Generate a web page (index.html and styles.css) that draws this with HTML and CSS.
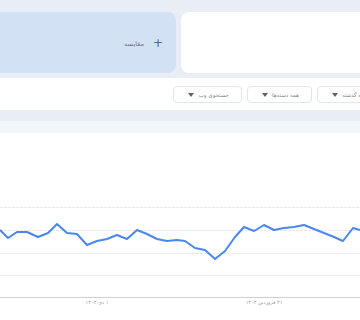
FILE: index.html
```html
<!DOCTYPE html>
<html lang="fa">
<head>
    <meta charset="UTF-8">
    <meta name="viewport" content="width=device-width, initial-scale=1.0">
    <title>روندها</title>
    <link rel="stylesheet" href="styles.css">
</head>
<body>
    <div class="page">
        <!-- search term cards -->
        <div class="terms">
            <div class="card compare">
                <span class="compare-label">مقایسه</span>
                <span class="plus">+</span>
            </div>
            <div class="card term"></div>
        </div>

        <!-- filters -->
        <div class="toolbar">
            <div class="chip chip-web"><span class="arrow"></span><span class="chip-text">جستجوی وب</span></div>
            <div class="chip chip-cat"><span class="arrow"></span><span class="chip-text">همه دسته‌ها</span></div>
            <div class="chip chip-time"><span class="arrow"></span><span class="chip-text">۱۲ ماه گذشته</span></div>
        </div>

        <div class="divider"></div>
        <div class="panel-head"></div>

        <!-- interest over time -->
        <div class="chart">
            <svg width="360" height="187" viewBox="0 0 360 187">
                <g class="grid">
                    <line x1="0" y1="74.5" x2="360" y2="74.5"></line>
                    <line x1="0" y1="97.5" x2="360" y2="97.5"></line>
                    <line x1="0" y1="120.5" x2="360" y2="120.5"></line>
                    <line x1="0" y1="142.5" x2="360" y2="142.5"></line>
                </g>
                <line class="axis" x1="0" y1="164.5" x2="360" y2="164.5"></line>
                <polyline class="series" points="0,97 8,105 17,99 27,99 38,104 48,100 57,91 67,100 77,101 87,112 97,108 107,106 117,102 127,106 137,97 147,101 157,106 167,108 177,107 185,108 195,115 205,117 215,126 225,118 235,104 244,94 254,98 264,92 274,97 284,95 294,94 304,92 314,96 324,100 334,104 343,108 353,95 360,97"></polyline>
                <text class="tick" x="97" y="171">۱ دی ۱۴۰۲</text>
                <text class="tick" x="264" y="171">۲۱ فروردین ۱۴۰۳</text>
            </svg>
        </div>
    </div>
</body>
</html>
```

FILE: styles.css
```css
body {
    margin: 0;
    background: #e9edf6;
    font-family: "DejaVu Sans", sans-serif;
    overflow: hidden;
}
.page {
    width: 360px;
    height: 320px;
    overflow: hidden;
}
.terms {
    display: flex;
    gap: 5px;
    margin-left: -100px;
    padding: 12px 0 5px;
}
.card {
    flex: none;
    width: 276px;
    height: 61px;
    border-radius: 8px;
}
.compare {
    background: #d3e1f4;
    display: flex;
    align-items: center;
    justify-content: flex-end;
    gap: 9px;
    padding-right: 13px;
    box-sizing: border-box;
    color: #70757a;
}
.compare-label {
    font-size: 6.5px;
    margin-top: 2px;
}
.plus {
    font-size: 12px;
    color: #5f6368;
}
.term {
    background: #fff;
}
.toolbar {
    background: #fff;
    height: 32px;
    display: flex;
    gap: 5px;
    padding: 8px 0 0 173px;
    box-sizing: border-box;
    white-space: nowrap;
}
.chip {
    flex: none;
    height: 17px;
    border: 1px solid #e3e5e8;
    border-radius: 4px;
    box-sizing: border-box;
    display: flex;
    align-items: center;
    justify-content: space-between;
    padding: 0 12px 0 14px;
    color: #80868b;
    font-size: 5.5px;
    overflow: hidden;
}
.chip-text {
    direction: rtl;
}
.chip-web {
    width: 69px;
}
.chip-cat {
    width: 65px;
}
.chip-time {
    width: 90px;
    justify-content: flex-start;
    gap: 4px;
    padding-left: 14px;
}
.arrow {
    flex: none;
    width: 0;
    height: 0;
    border-left: 3px solid transparent;
    border-right: 3px solid transparent;
    border-top: 4px solid #5f6368;
}
.divider {
    height: 11px;
    background: #e9edf6;
}
.panel-head {
    height: 12px;
    background: #f2f5fa;
}
.chart {
    background: #fff;
    height: 187px;
}
.chart svg {
    display: block;
}
.grid line {
    stroke: #e8e8e8;
    stroke-width: 1;
    stroke-dasharray: 3 1;
}
.axis {
    stroke: #d0d0d0;
    stroke-width: 1;
}
.series {
    fill: none;
    stroke: #4a86f0;
    stroke-width: 2;
    stroke-linejoin: round;
}
.tick {
    font-family: "DejaVu Sans", sans-serif;
    font-size: 5px;
    fill: #999;
    text-anchor: middle;
    direction: rtl;
}
```
